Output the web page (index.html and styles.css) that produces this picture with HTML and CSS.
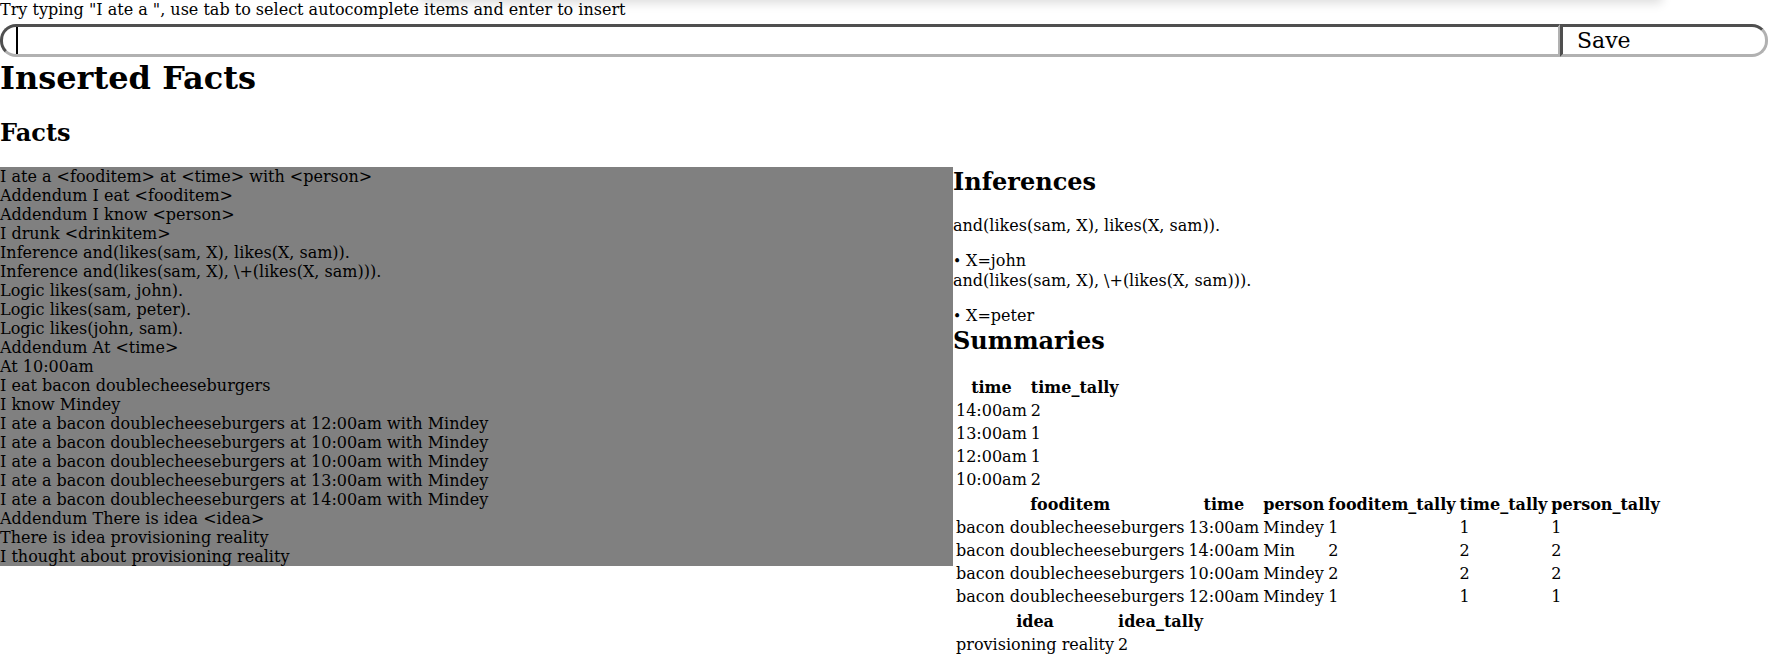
FILE: index.html
```html
<!DOCTYPE html>
<html>
<head>
<meta charset="utf-8">
<link rel="stylesheet" href="styles.css">
</head>
<body>
<div class="popup-shadow"></div>
<div class="hint">Try typing "I ate a ", use tab to select autocomplete items and enter to insert</div>
<form class="entry">
  <div class="field"><span class="caret"></span><input class="text-input" type="text"></div>
  <button class="save" type="button">Save</button>
</form>
<h1 class="title">Inserted Facts</h1>
<h2 class="section">Facts</h2>
<div class="layout">
  <div class="facts">
    <div>I ate a &lt;fooditem&gt; at &lt;time&gt; with &lt;person&gt;</div>
    <div>Addendum I eat &lt;fooditem&gt;</div>
    <div>Addendum I know &lt;person&gt;</div>
    <div>I drunk &lt;drinkitem&gt;</div>
    <div>Inference and(likes(sam, X), likes(X, sam)).</div>
    <div>Inference and(likes(sam, X), \+(likes(X, sam))).</div>
    <div>Logic likes(sam, john).</div>
    <div>Logic likes(sam, peter).</div>
    <div>Logic likes(john, sam).</div>
    <div>Addendum At &lt;time&gt;</div>
    <div>At 10:00am</div>
    <div>I eat bacon doublecheeseburgers</div>
    <div>I know Mindey</div>
    <div>I ate a bacon doublecheeseburgers at 12:00am with Mindey</div>
    <div>I ate a bacon doublecheeseburgers at 10:00am with Mindey</div>
    <div>I ate a bacon doublecheeseburgers at 10:00am with Mindey</div>
    <div>I ate a bacon doublecheeseburgers at 13:00am with Mindey</div>
    <div>I ate a bacon doublecheeseburgers at 14:00am with Mindey</div>
    <div>Addendum There is idea &lt;idea&gt;</div>
    <div>There is idea provisioning reality</div>
    <div>I thought about provisioning reality</div>
  </div>
  <div class="side">
    <h2 class="side-title">Inferences</h2>
    <div class="inference">and(likes(sam, X), likes(X, sam)).
      <ul class="results"><li>X=john</li></ul>
    </div>
    <div class="inference">and(likes(sam, X), \+(likes(X, sam))).
      <ul class="results"><li>X=peter</li></ul>
    </div>
    <h2 class="side-title summaries">Summaries</h2>
    <table class="summary">
      <thead><tr><th>time</th><th>time_tally</th></tr></thead>
      <tbody>
        <tr><td>14:00am</td><td>2</td></tr>
        <tr><td>13:00am</td><td>1</td></tr>
        <tr><td>12:00am</td><td>1</td></tr>
        <tr><td>10:00am</td><td>2</td></tr>
      </tbody>
    </table>
    <table class="summary">
      <thead><tr><th>fooditem</th><th>time</th><th>person</th><th>fooditem_tally</th><th>time_tally</th><th>person_tally</th></tr></thead>
      <tbody>
        <tr><td>bacon doublecheeseburgers</td><td>13:00am</td><td>Mindey</td><td>1</td><td>1</td><td>1</td></tr>
        <tr><td>bacon doublecheeseburgers</td><td>14:00am</td><td>Min</td><td>2</td><td>2</td><td>2</td></tr>
        <tr><td>bacon doublecheeseburgers</td><td>10:00am</td><td>Mindey</td><td>2</td><td>2</td><td>2</td></tr>
        <tr><td>bacon doublecheeseburgers</td><td>12:00am</td><td>Mindey</td><td>1</td><td>1</td><td>1</td></tr>
      </tbody>
    </table>
    <table class="summary">
      <thead><tr><th>idea</th><th>idea_tally</th></tr></thead>
      <tbody>
        <tr><td>provisioning reality</td><td>2</td></tr>
      </tbody>
    </table>
  </div>
</div>
</body>
</html>
```
FILE: styles.css
```css
html, body {
  margin: 0;
  padding: 0;
  background: #fff;
  color: #000;
  font-family: "DejaVu Serif", serif;
  font-size: 16px;
}
body {
  position: relative;
  overflow: hidden;
}
.popup-shadow {
  position: absolute;
  left: 420px;
  width: 1242px;
  top: -40px;
  height: 40px;
  background: #fff;
  box-shadow: 0 3px 10px rgba(0, 0, 0, 0.14);
  z-index: 0;
}
.hint {
  position: relative;
  z-index: 1;
  height: 19px;
  line-height: 19px;
}
.entry {
  display: flex;
  margin: 5px 4px 0 0;
  height: 33px;
}
.field {
  position: relative;
  flex: 1;
  display: flex;
  box-sizing: border-box;
  border-style: solid;
  border-width: 3px 2px 3px 3px;
  border-color: #4f4f4f #b1b1b1 #b1b1b1 #4f4f4f;
  border-radius: 16px 0 0 16px;
  background: #fff;
}
.caret {
  position: absolute;
  left: 13px;
  top: 0;
  bottom: 0;
  width: 2px;
  background: #000;
}
.text-input {
  flex: 1;
  border: none;
  outline: none;
  background: transparent;
  font-family: "DejaVu Serif", serif;
  font-size: 20px;
  padding: 0 14px;
  caret-color: transparent;
}
.save {
  width: 208px;
  box-sizing: border-box;
  border-style: solid;
  border-width: 3px;
  border-color: #4f4f4f #b1b1b1 #b1b1b1 #4f4f4f;
  border-radius: 0 16px 16px 0;
  background: #fff;
  font-family: "DejaVu Serif", serif;
  font-size: 22px;
  text-align: left;
  padding: 0 0 0 14px;
  color: #000;
}
.title {
  font-size: 32px;
  font-weight: bold;
  margin: 2px 0 21px 0;
}
.section {
  font-size: 24px;
  font-weight: bold;
  margin: 21px 0 20px 0;
}
.layout {
  display: flex;
  align-items: flex-start;
}
.facts {
  width: 953px;
  flex: none;
  background: #808080;
  line-height: 19px;
}
.side {
  flex: 1;
}
.side-title {
  font-size: 24px;
  font-weight: bold;
  margin: 0 0 20px 0;
}
.inference {
  line-height: 19px;
}
.results {
  margin: 16px 0 0 0;
  padding: 0;
  list-style: none;
}
.results li::before {
  content: "\2022";
  display: inline-block;
  width: 13px;
  font-size: 14px;
}
.summaries {
  margin-top: 0;
}
.summary {
  border-spacing: 2px;
  line-height: 19px;
}
.summary th, .summary td {
  padding: 1px;
  text-align: left;
}
.summary th {
  text-align: center;
}
```
